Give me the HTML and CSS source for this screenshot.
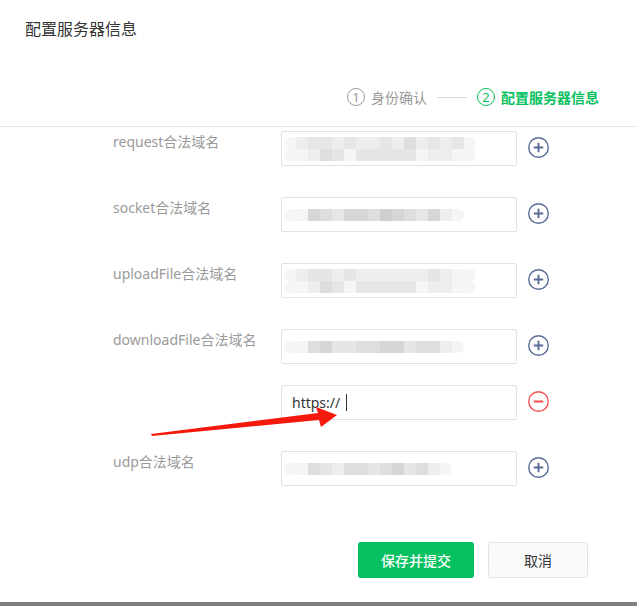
FILE: index.html
```html
<!DOCTYPE html>
<html lang="zh">
<head>
<meta charset="utf-8">
<title>配置服务器信息</title>
<link rel="stylesheet" href="styles.css">
</head>
<body>
<div class="dialog">
  <div class="head">
    <div class="title">配置服务器信息</div>
    <div class="steps">
      <div class="step done"><span class="num">1</span><span class="st">身份确认</span></div>
      <span class="sep"></span>
      <div class="step active"><span class="num">2</span><span class="st">配置服务器信息</span></div>
    </div>
  </div>

  <div class="form">
    <div class="row">
      <div class="label">request合法域名</div>
      <div class="input">
        <div class="mosaic">
          <div class="mrow"><i class="a"></i><i class="b"></i><i class="c"></i><i class="c"></i><i class="b"></i><i class="c"></i><i class="b"></i><i class="b"></i><i class="c"></i><i class="b"></i><i class="d"></i><i class="b"></i><i class="c"></i><i class="b"></i><i class="c"></i><i class="a"></i></div>
          <div class="mrow"><i class="a"></i><i class="a"></i><i class="b"></i><i class="d"></i><i class="c"></i><i class="a"></i><i class="c"></i><i class="c"></i><i class="c"></i><i class="c"></i><i class="c"></i><i class="a"></i><i class="b"></i><i class="b"></i><i class="a"></i><i class="a"></i></div>
        </div>
      </div>
      <span class="btn-icon plus"><svg viewBox="0 0 20 20"><circle cx="10" cy="10" r="9.3"/><path d="M10 5.5v9M5.5 10h9"/></svg></span>
    </div>

    <div class="row">
      <div class="label">socket合法域名</div>
      <div class="input">
        <div class="mosaic">
          <div class="mrow"><i class="a"></i><i class="a"></i><i class="e"></i><i class="d"></i><i class="c"></i><i class="e"></i><i class="e"></i><i class="d"></i><i class="f"></i><i class="e"></i><i class="d"></i><i class="c"></i><i class="e"></i><i class="b"></i><i class="a"></i></div>
        </div>
      </div>
      <span class="btn-icon plus"><svg viewBox="0 0 20 20"><circle cx="10" cy="10" r="9.3"/><path d="M10 5.5v9M5.5 10h9"/></svg></span>
    </div>

    <div class="row">
      <div class="label">uploadFile合法域名</div>
      <div class="input">
        <div class="mosaic">
          <div class="mrow"><i class="a"></i><i class="b"></i><i class="c"></i><i class="c"></i><i class="b"></i><i class="c"></i><i class="b"></i><i class="b"></i><i class="b"></i><i class="b"></i><i class="b"></i><i class="b"></i><i class="c"></i><i class="b"></i><i class="a"></i><i class="a"></i></div>
          <div class="mrow"><i class="a"></i><i class="a"></i><i class="b"></i><i class="d"></i><i class="c"></i><i class="a"></i><i class="c"></i><i class="c"></i><i class="c"></i><i class="c"></i><i class="c"></i><i class="a"></i><i class="b"></i><i class="b"></i><i class="a"></i><i class="a"></i></div>
        </div>
      </div>
      <span class="btn-icon plus"><svg viewBox="0 0 20 20"><circle cx="10" cy="10" r="9.3"/><path d="M10 5.5v9M5.5 10h9"/></svg></span>
    </div>

    <div class="row">
      <div class="label">downloadFile合法域名</div>
      <div class="input">
        <div class="mosaic">
          <div class="mrow"><i class="a"></i><i class="a"></i><i class="d"></i><i class="e"></i><i class="c"></i><i class="c"></i><i class="d"></i><i class="d"></i><i class="e"></i><i class="e"></i><i class="c"></i><i class="d"></i><i class="d"></i><i class="b"></i><i class="a"></i></div>
        </div>
      </div>
      <span class="btn-icon plus"><svg viewBox="0 0 20 20"><circle cx="10" cy="10" r="9.3"/><path d="M10 5.5v9M5.5 10h9"/></svg></span>
    </div>

    <div class="row extra">
      <div class="label"></div>
      <div class="input typed">https://<span class="caret"></span></div>
      <span class="btn-icon minus"><svg viewBox="0 0 20 20"><circle cx="10" cy="10" r="9.3"/><path d="M5.5 10h9"/></svg></span>
    </div>

    <div class="row">
      <div class="label">udp合法域名</div>
      <div class="input">
        <div class="mosaic">
          <div class="mrow"><i class="a"></i><i class="a"></i><i class="d"></i><i class="c"></i><i class="b"></i><i class="d"></i><i class="d"></i><i class="c"></i><i class="d"></i><i class="e"></i><i class="c"></i><i class="d"></i><i class="b"></i><i class="a"></i></div>
        </div>
      </div>
      <span class="btn-icon plus"><svg viewBox="0 0 20 20"><circle cx="10" cy="10" r="9.3"/><path d="M10 5.5v9M5.5 10h9"/></svg></span>
    </div>
  </div>

  <div class="actions">
    <button class="btn primary">保存并提交</button>
    <button class="btn default">取消</button>
  </div>

  <svg class="arrow" width="637" height="606" viewBox="0 0 637 606">
    <polygon points="151,434 318,413 316,407 337,415 321,427 319,420 152,436"/>
  </svg>
</div>
<div class="bottom-bar"></div>
</body>
</html>
```

FILE: styles.css
```css
* { box-sizing: border-box; }
html, body { margin: 0; padding: 0; background: #fff; }
body {
  width: 637px;
  height: 606px;
  overflow: hidden;
  font-family: "Noto Sans", "Noto Sans CJK SC", sans-serif;
  font-size: 14px;
  color: #353535;
}
.dialog { position: relative; height: 602px; }
.head {
  height: 127px;
  border-bottom: 1px solid #e7e7e7;
  display: flex;
  flex-direction: column;
  justify-content: space-between;
  padding: 18px 38px 19px 25px;
}
.title { font-size: 16px; line-height: 22px; color: #353535; }
.steps {
  display: flex;
  align-items: center;
  justify-content: flex-end;
  gap: 10px;
  height: 20px;
}
.step { display: flex; align-items: center; gap: 6px; font-size: 14px; }
.step .num {
  width: 18px; height: 18px;
  border: 1px solid currentColor;
  border-radius: 50%;
  display: flex; align-items: center; justify-content: center;
  font-size: 13px; line-height: 1;
}
.step.done { color: #9a9a9a; }
.step.active { color: #07c160; }
.step.active .num { border-width: 1.5px; }
.step.active .st { font-weight: 600; }
.sep { width: 30px; height: 1px; background: #d6d6d6; }

.form { padding: 4px 0 0 113px; }
.row { display: flex; align-items: flex-start; margin-bottom: 31px; }
.row.extra { margin-top: -10px; }
.label { width: 168px; line-height: 22px; color: #9a9a9a; font-size: 14px; }
.input {
  width: 236px; height: 35px;
  border: 1px solid #e2e2e2;
  border-radius: 2px;
  display: flex; align-items: center;
  padding-left: 2px;
}
.input.typed { padding-left: 10px; font-size: 14px; color: #353535; }
.caret { display: inline-block; width: 1px; height: 17px; background: #353535; margin-left: 6px; }
.mosaic { display: flex; flex-direction: column; filter: blur(0.6px); }
.mrow { display: flex; height: 12px; }
.mrow i { display: block; width: 12px; height: 100%; }
.mrow i:first-child { border-radius: 6px 0 0 6px; }
.mrow i:last-child { border-radius: 0 6px 6px 0; }
.mrow i.a { background: #f5f5f5; }
.mrow i.b { background: #ededed; }
.mrow i.c { background: #e6e6e6; }
.mrow i.d { background: #dedede; }
.mrow i.e { background: #d6d6d6; }
.mrow i.f { background: #cfcfcf; }

.btn-icon { width: 21px; height: 21px; margin: 6px 0 0 11px; display: block; }
.btn-icon svg { width: 21px; height: 21px; display: block; fill: none; stroke-width: 1.3; }
.btn-icon.plus svg { stroke: #576b95; }
.btn-icon.plus svg path { stroke-width: 1.8; }
.btn-icon.minus svg { stroke: #fa5151; }
.btn-icon.minus svg path { stroke-width: 2; }

.actions {
  display: flex; justify-content: flex-end; gap: 14px;
  padding: 25px 49px 0 0;
}
.btn {
  height: 36px; border-radius: 3px;
  font-family: "Noto Sans CJK SC", sans-serif;
  font-size: 14px; cursor: pointer;
}
.btn.primary { width: 116px; background: #07c160; color: #fff; border: none; font-weight: 500; }
.btn.default { width: 100px; background: #fafafa; color: #353535; border: 1px solid #e3e3e3; }

.arrow { position: absolute; left: 0; top: 0; pointer-events: none; }
.arrow polygon { fill: #f5190d; }
.bottom-bar { height: 4px; background: #7f7f7f; }
```
